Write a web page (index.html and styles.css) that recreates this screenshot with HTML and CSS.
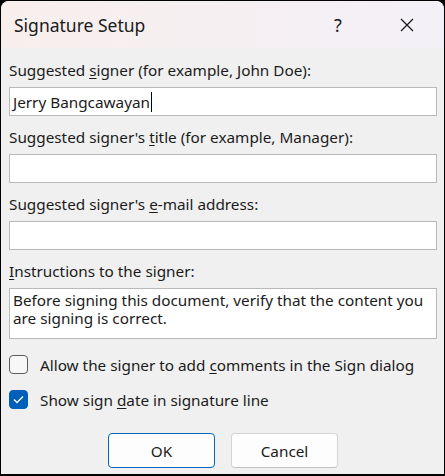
FILE: index.html
```html
<!DOCTYPE html>
<html lang="en">
<head>
  <meta charset="UTF-8" />
  <meta name="viewport" content="width=device-width, initial-scale=1" />
  <title>Signature Setup</title>
  <link rel="stylesheet" href="styles.css">
</head>
<body>
  <div class="window">
    <div class="titlebar">
      <span class="title">Signature Setup</span>
      <span class="caption-btn help">?</span>
      <span class="caption-btn close">
        <svg width="16" height="16" viewBox="0 0 16 16"><path d="M2 2 L14 14 M14 2 L2 14" stroke="#1b1b1b" stroke-width="1.3" fill="none"/></svg>
      </span>
    </div>

    <form class="content">
      <label class="field-label">Suggested <u>s</u>igner (for example, John Doe):</label>
      <div class="textbox"><span>Jerry Bangcawayan</span><span class="caret"></span></div>

      <label class="field-label">Suggested signer's <u>t</u>itle (for example, Manager):</label>
      <div class="textbox"></div>

      <label class="field-label">Suggested signer's <u>e</u>-mail address:</label>
      <div class="textbox"></div>

      <label class="field-label"><u>I</u>nstructions to the signer:</label>
      <div class="textbox multi">Before signing this document, verify that the content you<br>are signing is correct.</div>

      <label class="check"><span class="box"></span><span>Allow the signer to add <u>c</u>omments in the Sign dialog</span></label>
      <label class="check"><span class="box checked">
        <svg width="11" height="9" viewBox="0 0 11 9"><path d="M1 4.5 L4 7.5 L10 1.5" stroke="#fff" stroke-width="1.3" fill="none"/></svg>
      </span><span>Show sign <u>d</u>ate in signature line</span></label>

      <div class="buttons">
        <button type="button" class="default">OK</button>
        <button type="button">Cancel</button>
      </div>
    </form>
  </div>
</body>
</html>
```

FILE: styles.css
```css
body {
  margin: 0;
  background: #000;
  font-family: "Noto Sans", sans-serif;
  color: #1b1b1b;
}
.window {
  margin: 1px 0 0 1px;
  width: 443px;
  height: 473px;
  background: #f0f0f0;
  border-radius: 8px 8px 0 0;
  overflow: hidden;
  display: flex;
  flex-direction: column;
}
.titlebar {
  height: 47px;
  display: flex;
  align-items: center;
  padding: 0 14px 0 13px;
  background: linear-gradient(90deg, #f8efed, #f3f0f7);
}
.title {
  flex: 1;
  font-size: 17.5px;
}
.caption-btn {
  width: 46px;
  display: flex;
  justify-content: center;
  align-items: center;
  font-size: 18px;
}
.close {
  margin-left: 23px;
}
.content {
  padding: 12px 7px 0 8px;
  display: flex;
  flex-direction: column;
}
.field-label {
  font-size: 15.3px;
  line-height: 20px;
  margin: 11px 0 7px;
}
.field-label:first-child {
  margin-top: 0;
}
u {
  text-underline-offset: 2px;
}
.textbox {
  height: 29px;
  box-sizing: border-box;
  background: #fff;
  border: 1px solid #b9b9b9;
  padding: 0 3px;
  font-size: 15.3px;
  display: flex;
  align-items: center;
}
.caret {
  width: 1px;
  height: 20px;
  background: #000;
  margin-left: 1px;
}
.textbox.multi {
  height: 51px;
  display: block;
  padding: 2px 3px;
  line-height: 18px;
}
.check {
  display: flex;
  align-items: center;
  gap: 12px;
  font-size: 15.3px;
  height: 19px;
  margin-top: 16px;
}
.box {
  flex: none;
  width: 19px;
  height: 19px;
  box-sizing: border-box;
  border: 1px solid #5c5c5c;
  border-radius: 4px;
  background: #f7f7f7;
  display: flex;
  justify-content: center;
  align-items: center;
}
.box.checked {
  background: #005fb8;
  border-color: #005fb8;
}
.buttons {
  display: flex;
  justify-content: center;
  gap: 16px;
  margin-top: 24px;
}
button {
  width: 107px;
  height: 35px;
  background: #fdfdfd;
  border: 1px solid #d4d4d4;
  border-bottom-color: #c2c2c2;
  border-radius: 4px;
  font-family: "Noto Sans", sans-serif;
  font-size: 15.3px;
  color: #1b1b1b;
}
button.default {
  border: 1px solid #0067c0;
}
```
